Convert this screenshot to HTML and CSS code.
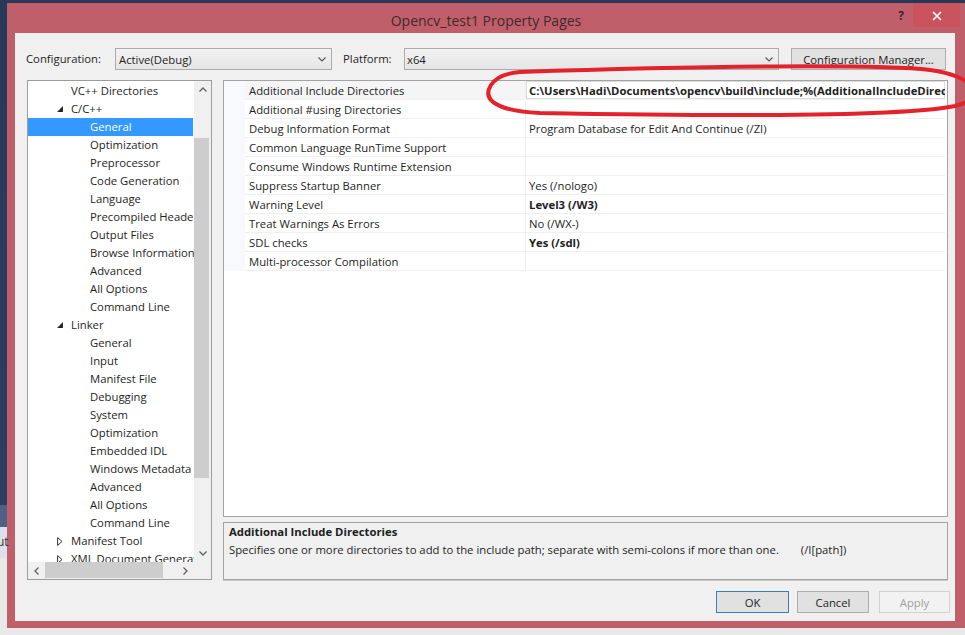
FILE: index.html
```html
<!DOCTYPE html>
<html>
<head>
<meta charset="utf-8">
<title>Opencv_test1 Property Pages</title>
<link rel="stylesheet" href="styles.css">
</head>
<body>
<span class="bg-frag">ut</span>
<div class="desktop">
  <div class="dialog">
    <div class="titlebar">
      <div></div>
      <div class="title">Opencv_test1 Property Pages</div>
      <div class="caption-btns">
        <span class="help">?</span>
        <span class="close"><svg width="10" height="10" viewBox="0 0 10 10"><path d="M1 1 L9 9 M9 1 L1 9" stroke="#ffffff" stroke-width="1.6" fill="none"/></svg></span>
      </div>
    </div>
    <div class="client">
      <div class="config-row">
        <span class="lbl lbl-config">Configuration:</span>
        <div class="combo combo-config"><span>Active(Debug)</span><svg class="chev" width="8" height="5" viewBox="0 0 8 5"><polyline points="0.5,0.5 4,4 7.5,0.5" fill="none" stroke="#555" stroke-width="1.1"/></svg></div>
        <span class="lbl lbl-platform">Platform:</span>
        <div class="combo combo-platform"><span>x64</span><svg class="chev" width="8" height="5" viewBox="0 0 8 5"><polyline points="0.5,0.5 4,4 7.5,0.5" fill="none" stroke="#555" stroke-width="1.1"/></svg></div>
        <div class="btn btn-cm">Configuration Manager...</div>
      </div>

      <div class="main">
        <div class="tree">
          <div class="tree-body">
            <div class="tree-items">
              <div class="item lv1"><span class="twisty"></span>VC++ Directories</div>
              <div class="item lv1"><span class="twisty"><svg width="6" height="6" viewBox="0 0 6 6"><polygon points="6,0 6,6 0,6" fill="#262626"/></svg></span>C/C++</div>
              <div class="item lv2 selected">General</div>
              <div class="item lv2">Optimization</div>
              <div class="item lv2">Preprocessor</div>
              <div class="item lv2">Code Generation</div>
              <div class="item lv2">Language</div>
              <div class="item lv2">Precompiled Headers</div>
              <div class="item lv2">Output Files</div>
              <div class="item lv2">Browse Information</div>
              <div class="item lv2">Advanced</div>
              <div class="item lv2">All Options</div>
              <div class="item lv2">Command Line</div>
              <div class="item lv1"><span class="twisty"><svg width="6" height="6" viewBox="0 0 6 6"><polygon points="6,0 6,6 0,6" fill="#262626"/></svg></span>Linker</div>
              <div class="item lv2">General</div>
              <div class="item lv2">Input</div>
              <div class="item lv2">Manifest File</div>
              <div class="item lv2">Debugging</div>
              <div class="item lv2">System</div>
              <div class="item lv2">Optimization</div>
              <div class="item lv2">Embedded IDL</div>
              <div class="item lv2">Windows Metadata</div>
              <div class="item lv2">Advanced</div>
              <div class="item lv2">All Options</div>
              <div class="item lv2">Command Line</div>
              <div class="item lv1"><span class="twisty"><svg width="6" height="9" viewBox="0 0 6 9"><polygon points="0.6,0.6 5,4.5 0.6,8.4" fill="none" stroke="#333" stroke-width="1"/></svg></span>Manifest Tool</div>
              <div class="item lv1"><span class="twisty"><svg width="6" height="9" viewBox="0 0 6 9"><polygon points="0.6,0.6 5,4.5 0.6,8.4" fill="none" stroke="#333" stroke-width="1"/></svg></span>XML Document Generator</div>
            </div>
            <div class="vscroll">
              <div class="sb-arrow"><svg width="8" height="5" viewBox="0 0 8 5"><polyline points="0.5,4.5 4,1 7.5,4.5" fill="none" stroke="#606060" stroke-width="1.3"/></svg></div>
              <div class="sb-track"><div class="vthumb"></div></div>
              <div class="sb-arrow"><svg width="8" height="5" viewBox="0 0 8 5"><polyline points="0.5,0.5 4,4 7.5,0.5" fill="none" stroke="#606060" stroke-width="1.3"/></svg></div>
            </div>
          </div>
          <div class="hscroll-row">
            <div class="hscroll">
              <div class="sb-arrow h"><svg width="5" height="8" viewBox="0 0 5 8"><polyline points="4.5,0.5 1,4 4.5,7.5" fill="none" stroke="#606060" stroke-width="1.3"/></svg></div>
              <div class="sb-track h"><div class="hthumb"></div></div>
              <div class="sb-arrow h"><svg width="5" height="8" viewBox="0 0 5 8"><polyline points="0.5,0.5 4,4 0.5,7.5" fill="none" stroke="#606060" stroke-width="1.3"/></svg></div>
            </div>
            <div class="corner"></div>
          </div>
        </div>

        <div class="right">
          <div class="grid">
            <div class="row first"><span class="margin"></span><span class="name">Additional Include Directories</span><span class="value bold edit">C:\Users\Hadi\Documents\opencv\build\include;%(AdditionalIncludeDirectories)</span></div>
            <div class="row"><span class="margin"></span><span class="name">Additional #using Directories</span><span class="value"></span></div>
            <div class="row"><span class="margin"></span><span class="name">Debug Information Format</span><span class="value">Program Database for Edit And Continue (/ZI)</span></div>
            <div class="row"><span class="margin"></span><span class="name">Common Language RunTime Support</span><span class="value"></span></div>
            <div class="row"><span class="margin"></span><span class="name">Consume Windows Runtime Extension</span><span class="value"></span></div>
            <div class="row"><span class="margin"></span><span class="name">Suppress Startup Banner</span><span class="value">Yes (/nologo)</span></div>
            <div class="row"><span class="margin"></span><span class="name">Warning Level</span><span class="value bold">Level3 (/W3)</span></div>
            <div class="row"><span class="margin"></span><span class="name">Treat Warnings As Errors</span><span class="value">No (/WX-)</span></div>
            <div class="row"><span class="margin"></span><span class="name">SDL checks</span><span class="value bold">Yes (/sdl)</span></div>
            <div class="row"><span class="margin"></span><span class="name">Multi-processor Compilation</span><span class="value"></span></div>
          </div>
          <div class="desc">
            <div class="desc-title">Additional Include Directories</div>
            <div class="desc-text">Specifies one or more directories to add to the include path; separate with semi-colons if more than one.<span class="switch">(/I[path])</span></div>
          </div>
        </div>
      </div>

      <div class="buttons">
        <div class="btn btn-ok">OK</div>
        <div class="btn btn-cancel">Cancel</div>
        <div class="btn btn-apply">Apply</div>
      </div>
    </div>
  </div>
</div>
<svg class="annot" width="965" height="635" viewBox="0 0 965 635">
  <path d="M 520 72 C 700 66, 880 64, 930 70 C 975 76, 990 98, 955 106 C 900 117, 700 116, 540 113 C 495 111, 482 99, 491 85 C 497 76, 508 73, 520 72 Z" fill="none" stroke="#e4222b" stroke-width="4" stroke-linejoin="round"/>
</svg>
</body>
</html>
```

FILE: styles.css
```css
* { box-sizing: border-box; }
html, body { margin: 0; padding: 0; }
body {
  width: 965px;
  height: 635px;
  overflow: hidden;
  position: relative;
  font-family: "Open Sans", "Noto Sans", sans-serif;
  font-size: 11.3px;
  color: #1e1e1e;
  background: linear-gradient(to bottom, #283859 0, #2c3d5f 505px, #4f6087 505px, #4f6087 527px, #dde0ea 527px, #dde0ea 558px, #e9e9e9 558px);
}
.bg-frag {
  position: absolute;
  left: -3px;
  top: 533px;
  font-size: 12px;
  color: #333;
}
.desktop { padding: 3px 0 0 7px; }
.dialog {
  width: 958px;
  height: 625px;
  background: #c05f69;
  padding: 0 10px 7px 8px;
  display: flex;
  flex-direction: column;
}
.titlebar {
  height: 30px;
  margin: 0 -10px 0 -8px;
  display: grid;
  grid-template-columns: 1fr auto 1fr;
  align-items: start;
}
.title {
  font-size: 14px;
  color: #3d2a2e;
  line-height: 20px;
  padding-top: 8px;
}
.caption-btns {
  justify-self: end;
  display: flex;
  align-items: flex-start;
  margin-right: 5px;
}
.help {
  font-size: 12px;
  font-weight: bold;
  color: #3a2a2c;
  line-height: 14px;
  margin-top: 6px;
  margin-right: 9px;
}
.close {
  width: 47px;
  height: 24px;
  background: #c9545e;
  display: flex;
  align-items: center;
  justify-content: center;
  padding-top: 1px;
}
.client {
  flex: 1;
  background: #f0f0f0;
  padding: 15px 7px 8px 12px;
  display: flex;
  flex-direction: column;
}
.config-row {
  height: 22px;
  display: flex;
  align-items: center;
}
.lbl { line-height: 22px; }
.lbl-config { width: 88px; margin-left: -1px; }
.lbl-platform { margin-left: 11px; width: 61px; }
.combo {
  height: 22px;
  border: 1px solid #acacac;
  background: linear-gradient(to bottom, #f2f2f2, #e6e6e6);
  display: flex;
  align-items: center;
  justify-content: space-between;
  padding: 0 5px 0 3px;
}
.combo-config { width: 217px; margin-left: 1px; }
.combo-platform { width: 375px; padding-left: 2px; }
.chev { display: block; }
.btn {
  height: 22px;
  border: 1px solid #adadad;
  background: #e1e1e1;
  display: flex;
  align-items: center;
  justify-content: center;
}
.btn-cm { margin-left: 12px; width: 155px; }
.main {
  margin-top: 10px;
  height: 500px;
  display: flex;
  gap: 11px;
}
.tree {
  width: 185px;
  height: 500px;
  border: 1px solid #9c9c9c;
  background: #ffffff;
  display: flex;
  flex-direction: column;
}
.tree-body { height: 481px; display: flex; }
.tree-items {
  flex: 1;
  overflow: hidden;
  padding-top: 1px;
}
.item {
  height: 18px;
  line-height: 18px;
  white-space: nowrap;
  display: flex;
  align-items: center;
  color: #1e1e1e;
}
.lv1 { padding-left: 29px; }
.lv2 { padding-left: 62px; }
.twisty {
  width: 14px;
  height: 18px;
  display: flex;
  align-items: center;
  flex-shrink: 0;
}
.twisty svg { display: block; }
.item.selected { background: #3399ff; color: #ffffff; margin-right: 1px; }
.vscroll {
  width: 17px;
  background: #f0f0f0;
  display: flex;
  flex-direction: column;
}
.sb-arrow {
  width: 17px;
  height: 17px;
  display: flex;
  align-items: center;
  justify-content: center;
  flex-shrink: 0;
}
.sb-track { flex: 1; }
.vthumb {
  margin: 40px 1px 0 0;
  width: 15px;
  height: 340px;
  background: #cdcdcd;
}
.hscroll-row { height: 17px; display: flex; }
.hscroll {
  flex: 1;
  background: #f0f0f0;
  display: flex;
}
.sb-track.h { display: flex; align-items: stretch; }
.hthumb {
  width: 118px;
  margin: 0 0 1px 0;
  background: #cdcdcd;
}
.corner { width: 17px; background: #f0f0f0; }
.right {
  width: 725px;
  display: flex;
  flex-direction: column;
  gap: 5px;
}
.grid {
  height: 437px;
  border: 1px solid #a3a3a3;
  background: #ffffff;
}
.row {
  height: 19px;
  display: flex;
  line-height: 19px;
  white-space: nowrap;
}
.margin { width: 21px; background: #f7f9fc; flex-shrink: 0; }
.name {
  width: 281px;
  flex-shrink: 0;
  padding-left: 4px;
  border-right: 1px solid #f0f0f0;
  border-bottom: 1px solid #f0f0f0;
}
.row.first .name { background: #f5f5f5; }
.value {
  flex: 1;
  min-width: 0;
  overflow: hidden;
  padding-left: 3px;
  margin-right: 2px;
  border-bottom: 1px solid #f0f0f0;
}
.value.edit { box-shadow: inset 0 0 0 1px #dcdcdc; }
.bold { font-weight: bold; }
.desc {
  height: 58px;
  border: 1px solid #a3a3a3;
  box-shadow: 0 1px 0 #c6c6c6;
  background: #f0f0f0;
  padding: 0 5px;
  line-height: 18px;
  white-space: nowrap;
}
.desc-title { font-weight: bold; }
.switch { margin-left: 22px; }
.buttons {
  margin-top: 11px;
  margin-right: -2px;
  height: 22px;
  display: flex;
  justify-content: flex-end;
}
.btn-ok { width: 73px; border-color: #3c7fb1; }
.btn-cancel { width: 72px; margin-left: 8px; }
.btn-apply { width: 71px; margin-left: 10px; color: #a0a0a0; border-color: #d2d2d2; background: #f2f2f2; }
.annot {
  position: absolute;
  left: 0;
  top: 0;
  pointer-events: none;
}
```
